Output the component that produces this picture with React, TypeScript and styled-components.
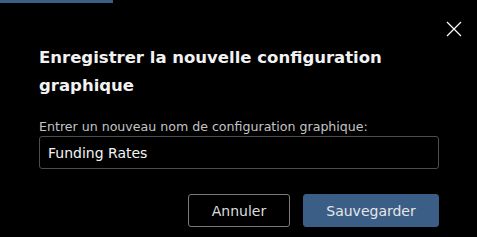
import React, { useState } from "react";
import styled, { createGlobalStyle } from "styled-components";

const GlobalStyle = createGlobalStyle`
  body {
    margin: 0;
    background: #000;
    font-family: "DejaVu Sans", Verdana, sans-serif;
    -webkit-font-smoothing: none;
  }
`;

const blue = "#3a5e86";

export default function App() {
  const [name, setName] = useState("Funding Rates");

  return (
    <Page>
      <GlobalStyle />
      <TopBar />
      <Dialog>
        <Header>
          <Title>Enregistrer la nouvelle configuration graphique</Title>
          <CloseButton aria-label="Fermer">
            <svg width="16" height="16" viewBox="0 0 16 16">
              <path d="M1 1 L15 15 M15 1 L1 15" stroke="#fff" strokeWidth="1.2" fill="none" />
            </svg>
          </CloseButton>
        </Header>
        <Body>
          <Label htmlFor="cfg-name">Entrer un nouveau nom de configuration graphique:</Label>
          <Input id="cfg-name" value={name} onChange={(e) => setName(e.target.value)} />
          <Footer>
            <Button>Annuler</Button>
            <Button primary>Sauvegarder</Button>
          </Footer>
        </Body>
      </Dialog>
    </Page>
  );
}

const Page = styled.div`
  min-height: 237px;
  background: #000;
`;

const TopBar = styled.div`
  width: 113px;
  height: 3px;
  background: ${blue};
`;

const Dialog = styled.div`
  padding: 18px 15px 0 39px;
`;

const Header = styled.div`
  display: flex;
  align-items: flex-start;
  gap: 10px;
`;

const Title = styled.h2`
  flex: 1;
  margin: 23px 0 0;
  font-size: 16.5px;
  font-weight: bold;
  line-height: 28px;
  color: #f2f2f2;
`;

const CloseButton = styled.button`
  display: flex;
  width: 16px;
  height: 16px;
  padding: 0;
  border: none;
  background: none;
  cursor: pointer;
`;

const Body = styled.div`
  display: flex;
  flex-direction: column;
  margin-right: 23px;
  margin-top: 19px;
`;

const Label = styled.label`
  font-size: 12.6px;
  line-height: 16px;
  color: #c4c4c4;
`;

const Input = styled.input`
  box-sizing: border-box;
  height: 33px;
  margin-top: 1px;
  padding: 0 8px;
  border: 1px solid #4d4d4d;
  border-radius: 3px;
  background: #000;
  color: #f4f4f4;
  font-family: inherit;
  font-size: 14px;
  outline: none;
`;

const Footer = styled.div`
  display: flex;
  justify-content: flex-end;
  gap: 13px;
  margin-top: 25px;
`;

const Button = styled.button<{ primary?: boolean }>`
  box-sizing: border-box;
  height: 33px;
  width: ${(p) => (p.primary ? "136px" : "102px")};
  border: 1px solid ${(p) => (p.primary ? blue : "#7a7a7a")};
  border-radius: 3px;
  background: ${(p) => (p.primary ? blue : "#000")};
  color: ${(p) => (p.primary ? "#e6e6e6" : "#dcdcdc")};
  font-family: inherit;
  font-size: 14px;
  cursor: pointer;
`;
